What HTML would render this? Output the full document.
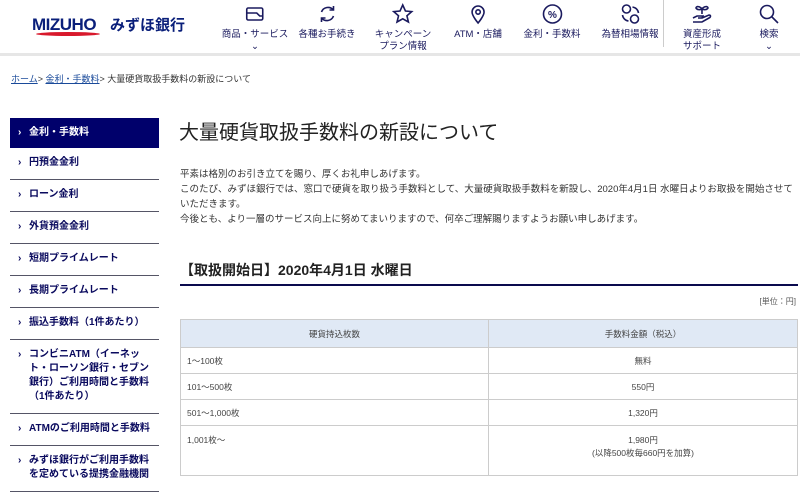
<!DOCTYPE html><html><head><meta charset="utf-8"><style>
*{margin:0;padding:0;box-sizing:border-box}
body{width:800px;height:467px;overflow:hidden;background:#fff;font-family:"Liberation Sans","Noto Sans CJK JP",sans-serif;color:#333;position:relative}
.hdr{position:absolute;left:0;top:0;width:800px;height:56px;border-bottom:3px solid #e6e6e6}
.logo{position:absolute;left:32px;top:15px;font:bold 17px "Liberation Sans",sans-serif;color:#0a1f7a;letter-spacing:-0.5px}
.swoosh{position:absolute;left:36px;top:32px;width:64px;height:4px;border-radius:50%;background:#d8192c}
.bank{position:absolute;left:110px;top:14px;font-size:15px;color:#0a1f7a;font-weight:bold}
.nav{position:absolute;top:0;text-align:center;font-size:9.5px;color:#1a1a5e;line-height:12px;transform:translateX(-50%);white-space:nowrap}
.nav svg{display:block;margin:3px auto 4px;width:22px;height:22px}
.div{position:absolute;left:663px;top:0;width:1px;height:47px;background:#ccc}
.bc{position:absolute;left:11px;top:72px;font-size:9px;color:#333}
.bc a{color:#1a4a9a;text-decoration:underline}
.side{position:absolute;left:10px;top:118px;width:149px}
.side div{font-size:10px;font-weight:bold;color:#0a0a5e;border-bottom:1px solid #556;padding:8px 4px 9px 19px;position:relative;line-height:14px}
.side div:before{content:"›";position:absolute;left:8px;font-weight:bold}
.side .act{background:#00006b;color:#fff;border:none;height:30px}
h1{position:absolute;left:179px;top:116px;font-size:20px;font-weight:normal;color:#222}
.p{position:absolute;left:180px;top:167px;width:618px;font-size:9.5px;line-height:15px;color:#333}
h2{position:absolute;left:180px;top:260px;width:618px;font-size:14px;font-weight:bold;color:#222;border-bottom:2px solid #0a0a4e;height:26px}
.unit{position:absolute;right:4px;top:296px;font-size:8px;color:#555}
table{position:absolute;left:180px;top:319px;width:618px;border-collapse:collapse;font-size:8.5px;color:#444}
td,th{border:1px solid #ccc;height:26px;padding:0 6px;font-weight:normal}
th{background:#e0e9f5;height:28px}
td:nth-child(2){text-align:center;width:309px}
</style></head><body>
<div class="hdr">
<div class="logo">MIZUHO</div><div class="swoosh"></div>
<div class="bank">みずほ銀行</div>
<div class="nav" style="left:255px"><svg viewBox="0 0 22 22" fill="none" stroke="#1a1a5e" stroke-width="1.6"><rect x="3" y="5" width="16" height="12" rx="1.5"/><path d="M3 10h10l3 3h3"/></svg>商品・サービス<br>⌄</div>
<div class="nav" style="left:327px"><svg viewBox="0 0 22 22" fill="none" stroke="#1a1a5e" stroke-width="1.6"><path d="M5 9a7 7 0 0 1 12-2M17 13a7 7 0 0 1-12 2"/><path d="M17 3v4h-4M5 19v-4h4"/></svg>各種お手続き</div>
<div class="nav" style="left:403px"><svg viewBox="0 0 22 22" fill="none" stroke="#1a1a5e" stroke-width="1.6"><path d="M11 2l2.7 6 6.3.6-4.8 4.2 1.5 6.2L11 15.8 5.3 19l1.5-6.2L2 8.6 8.3 8z"/></svg>キャンペーン<br>プラン情報</div>
<div class="nav" style="left:478px"><svg viewBox="0 0 22 22" fill="none" stroke="#1a1a5e" stroke-width="1.6"><path d="M11 20s-6-7-6-11a6 6 0 0 1 12 0c0 4-6 11-6 11z"/><circle cx="11" cy="9" r="2.2"/></svg>ATM・店舗</div>
<div class="nav" style="left:552px"><svg viewBox="0 0 22 22" fill="none" stroke="#1a1a5e" stroke-width="1.6"><circle cx="11" cy="11" r="9"/><text x="11" y="15" font-size="10" text-anchor="middle" fill="#1a1a5e" stroke="none" font-weight="bold">%</text></svg>金利・手数料</div>
<div class="nav" style="left:630px"><svg viewBox="0 0 22 22" fill="none" stroke="#1a1a5e" stroke-width="1.6"><circle cx="7" cy="6" r="4"/><circle cx="15" cy="16" r="4"/><path d="M13 4a7 7 0 0 1 6 6M9 18a7 7 0 0 1-6-6"/></svg>為替相場情報</div>
<div class="div"></div>
<div class="nav" style="left:702px"><svg viewBox="0 0 22 22" fill="none" stroke="#1a1a5e" stroke-width="1.6"><path d="M11 11V6M11 6c-2-3-6-3-6-1 1 2 4 2 6 1zM11 6c2-3 6-3 6-1-1 2-4 2-6 1z"/><path d="M2 15l4-2h6l-1 2h-4M11 15l7-3c2 0 2 2 0 3l-7 4H2"/></svg>資産形成<br>サポート</div>
<div class="nav" style="left:769px"><svg viewBox="0 0 22 22" fill="none" stroke="#1a1a5e" stroke-width="1.6"><circle cx="9" cy="9" r="6.5"/><path d="M14 14l6 6"/></svg>検索<br>⌄</div>
</div>
<div class="bc"><a>ホーム</a>&gt; <a>金利・手数料</a>&gt; 大量硬貨取扱手数料の新設について</div>
<div class="side">
<div class="act" style="padding-top:8px">金利・手数料</div>
<div>円預金金利</div><div>ローン金利</div><div>外貨預金金利</div><div>短期プライムレート</div><div>長期プライムレート</div><div>振込手数料（1件あたり）</div>
<div>コンビニATM（イーネット・ローソン銀行・セブン銀行）ご利用時間と手数料（1件あたり）</div>
<div>ATMのご利用時間と手数料</div><div>みずほ銀行がご利用手数料を定めている提携金融機関</div>
</div>
<h1>大量硬貨取扱手数料の新設について</h1>
<div class="p">平素は格別のお引き立てを賜り、厚くお礼申しあげます。<br>このたび、みずほ銀行では、窓口で硬貨を取り扱う手数料として、大量硬貨取扱手数料を新設し、2020年4月1日 水曜日よりお取扱を開始させていただきます。<br>今後とも、より一層のサービス向上に努めてまいりますので、何卒ご理解賜りますようお願い申しあげます。</div>
<h2>【取扱開始日】2020年4月1日 水曜日</h2>
<div class="unit">[単位：円]</div>
<table>
<tr><th>硬貨持込枚数</th><th>手数料金額（税込）</th></tr>
<tr><td>1～100枚</td><td>無料</td></tr>
<tr><td>101～500枚</td><td>550円</td></tr>
<tr><td>501～1,000枚</td><td>1,320円</td></tr>
<tr><td style="vertical-align:top;padding-top:8px;height:50px">1,001枚～</td><td style="vertical-align:top;padding-top:8px;line-height:13px">1,980円<br>(以降500枚毎660円を加算)</td></tr>
</table>
</body></html>
